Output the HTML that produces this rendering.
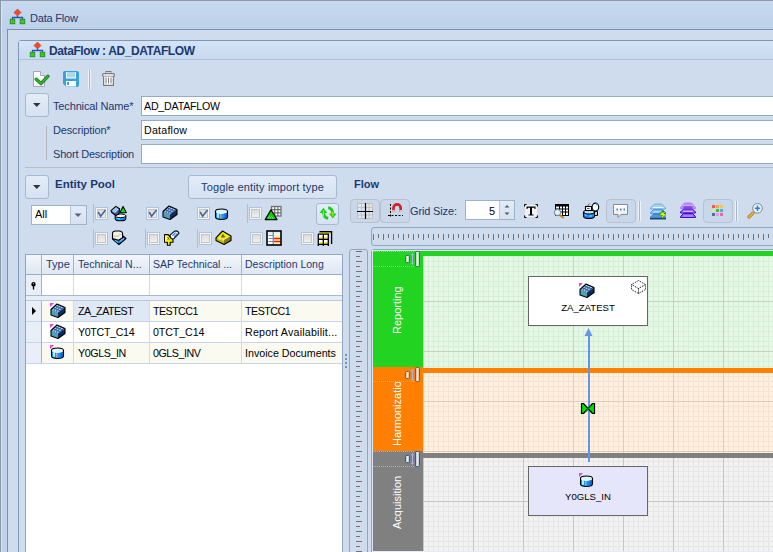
<!DOCTYPE html>
<html><head><meta charset="utf-8">
<style>
*{margin:0;padding:0;box-sizing:border-box}
html,body{width:773px;height:552px;overflow:hidden;background:#cfdcee;font-family:"Liberation Sans",sans-serif;font-size:11px;color:#1b3870}
.a{position:absolute}
.t{position:absolute;white-space:nowrap;line-height:13px}
.hl{position:absolute;height:1px}
.vl{position:absolute;width:1px}
.btn{position:absolute;border:1px solid #a7b9d1;border-radius:3px;background:linear-gradient(#e3ecf8,#d6e2f2)}
.inp{position:absolute;background:#fff;border:1px solid #94abc8}
.cb{position:absolute;width:13px;height:13px;border:1px solid #b5c3d5;background:linear-gradient(#dde3ea,#f4f6f9)}
.sep{position:absolute;width:1px;background:#aeb6c0}
.lbl{color:#1b3870}
.cell{position:absolute;color:#000;white-space:nowrap;line-height:13px}
</style></head><body>
<domain style="display:none">Computer-Use</domain>
<!-- outer window -->
<div class="a" style="left:0;top:0;width:773px;height:29px;background:linear-gradient(#c8d9ee,#bdd1ea)"></div>
<div class="hl" style="left:0;top:0;width:773px;background:#8e9aaa"></div>
<div class="vl" style="left:0;top:0;height:552px;background:#8b97a6"></div>
<div class="a" style="left:1px;top:29px;width:6px;height:523px;background:#bfd2ea"></div>
<div class="vl" style="left:1px;top:1px;height:551px;background:#d9e5f4"></div>
<div class="t" style="left:30px;top:12px;font-size:11px;letter-spacing:-0.2px">Data Flow</div>
<div class="hl" style="left:7px;top:29px;width:766px;background:#7890b0"></div>
<div class="vl" style="left:7px;top:29px;height:523px;background:#7890b0"></div>
<!-- panel -->
<div class="a" style="left:18px;top:40px;width:760px;height:520px;border:1px solid #7f98b9;border-radius:3px 0 0 0;background:#cfdcee"></div>
<div class="a" style="left:19px;top:41px;width:754px;height:18px;background:linear-gradient(#d4e4f7,#c8daf0)"></div>
<div class="hl" style="left:19px;top:59px;width:754px;background:#adc3dc"></div>
<div class="t" style="left:49px;top:44.5px;font-weight:bold;font-size:12px;letter-spacing:-0.4px">DataFlow : AD_DATAFLOW</div>

<!-- title icons -->
<svg class="a" style="left:9px;top:8px" width="18" height="17">
 <path d="M8.5 1 L12 4.5 L8.5 8 L5 4.5 Z" fill="#f04a2a" stroke="#d03010" stroke-width="0.6"/>
 <path d="M8.5 8 V9.5 M3.5 11.5 V9.5 H13.5 V11.5" stroke="#2454c8" stroke-width="1.3" fill="none"/>
 <rect x="1.2" y="11.2" width="4.6" height="4.6" fill="#3cc828" stroke="#1c8a10" stroke-width="0.8"/>
 <rect x="11.2" y="11.2" width="4.6" height="4.6" fill="#3cc828" stroke="#1c8a10" stroke-width="0.8"/>
</svg>
<svg class="a" style="left:29px;top:41px" width="18" height="17">
 <path d="M8.5 1 L12 4.5 L8.5 8 L5 4.5 Z" fill="#f04a2a" stroke="#d03010" stroke-width="0.6"/>
 <path d="M8.5 8 V9.5 M3.5 11.5 V9.5 H13.5 V11.5" stroke="#2454c8" stroke-width="1.3" fill="none"/>
 <rect x="1.2" y="11.2" width="4.6" height="4.6" fill="#3cc828" stroke="#1c8a10" stroke-width="0.8"/>
 <rect x="11.2" y="11.2" width="4.6" height="4.6" fill="#3cc828" stroke="#1c8a10" stroke-width="0.8"/>
</svg>
<!-- toolbar -->
<svg class="a" style="left:30px;top:68px" width="22" height="22">
 <path d="M3.5 3.5 H10.5 L14.5 7.5 V18.5 H3.5 Z" fill="#fff" stroke="#a6a3c2"/>
 <path d="M10.5 3.5 V7.5 H14.5" fill="#e8e8f0" stroke="#a6a3c2"/>
 <path d="M6.2 11.2 L11 15.6 L18 8.2" fill="none" stroke="#148814" stroke-width="3.4" stroke-linecap="round" stroke-linejoin="round"/>
 <path d="M6.2 11.2 L11 15.6 L18 8.2" fill="none" stroke="#3cb83c" stroke-width="1.4" stroke-linecap="round" stroke-linejoin="round"/>
</svg>
<svg class="a" style="left:60px;top:68px" width="22" height="22">
 <path d="M4.5 3 H17 Q19 3 19 5 V17 Q19 19 17 19 H6.5 L3 15.5 V4.5 Q3 3 4.5 3 Z" fill="#3aa2da"/>
 <rect x="6" y="4" width="10" height="6.5" fill="#fff"/>
 <rect x="7" y="4" width="8" height="5.5" fill="#a8d8ee"/>
 <rect x="6" y="13" width="10" height="5.5" fill="#fff"/>
 <rect x="7" y="14" width="2" height="3" fill="#3aa2da"/>
</svg>
<div class="vl" style="left:88px;top:69px;height:20px;background:#eef3fa"></div>
<div class="vl" style="left:89px;top:69px;height:20px;background:#a5b6cc"></div>
<div class="vl" style="left:90px;top:69px;height:20px;background:#eef3fa"></div>
<svg class="a" style="left:100px;top:69px" width="17" height="19">
 <path d="M6 3.5 V2.5 H11 V3.5" fill="none" stroke="#7a7a7a" stroke-width="1.2"/>
 <rect x="2.6" y="4.6" width="11.8" height="2.8" rx="1" fill="#fff" stroke="#7a7a7a" stroke-width="1.2"/>
 <path d="M3.6 7.5 V16.4 H13.4 V7.5" fill="#fff" stroke="#7a7a7a" stroke-width="1.2"/>
 <path d="M6 8.5 V14.5 M8.5 8.5 V14.5 M11 8.5 V14.5" stroke="#7a7a7a" stroke-width="1"/>
</svg>
<!-- form -->
<div class="btn" style="left:25px;top:93px;width:24px;height:24px"></div>
<svg class="a" style="left:33px;top:103px" width="8" height="4"><path d="M0 0 H7.5 L3.75 4 Z" fill="#333"/></svg>
<div class="t lbl" style="left:53px;top:100px;letter-spacing:-0.15px">Technical Name*</div>
<div class="t lbl" style="left:53px;top:124px;letter-spacing:-0.15px">Description*</div>
<div class="t lbl" style="left:53px;top:148px;letter-spacing:-0.2px">Short Description</div>
<div class="inp" style="left:141px;top:96px;width:640px;height:20px"></div>
<div class="inp" style="left:141px;top:120px;width:640px;height:20px"></div>
<div class="inp" style="left:141px;top:144px;width:640px;height:20px"></div>
<div class="t" style="left:144px;top:100px;color:#000;font-size:10.6px;letter-spacing:-0.18px">AD_DATAFLOW</div>
<div class="t" style="left:144px;top:124px;color:#000;font-size:10.6px;letter-spacing:0.25px">Dataflow</div>
<div class="vl" style="left:46px;top:126px;height:34px;background:#b4b9bf"></div>
<div class="hl" style="left:25px;top:167px;width:748px;background:#b9bdc3"></div>

<!-- entity pool -->
<div class="btn" style="left:25px;top:175px;width:24px;height:24px"></div>
<svg class="a" style="left:33px;top:185px" width="8" height="4"><path d="M0 0 H7.5 L3.75 4 Z" fill="#333"/></svg>
<div class="t" style="left:55px;top:178px;font-weight:bold;font-size:11.5px">Entity Pool</div>
<div class="btn" style="left:188px;top:175px;width:149px;height:24px"></div>
<div class="t" style="left:201px;top:181px;letter-spacing:0.15px">Toggle entity import type</div>

<div class="inp" style="left:31px;top:205px;width:56px;height:20px;border-color:#9fb2cc"></div>
<div class="t" style="left:35px;top:208px;color:#000">All</div>
<div class="a" style="left:70px;top:206px;width:16px;height:18px;border-left:1px solid #b7c6d9;background:linear-gradient(#e3ebf6,#d7e2f1)"></div>

<!-- entity pool controls -->
<div class="vl" style="left:93px;top:204px;height:19px;background:#b9bcbf"></div>
<div class="vl" style="left:247px;top:204px;height:19px;background:#b9bcbf"></div>
<div class="vl" style="left:93px;top:229px;height:19px;background:#b9bcbf"></div>
<div class="vl" style="left:145px;top:229px;height:19px;background:#b9bcbf"></div>
<div class="vl" style="left:197px;top:229px;height:19px;background:#b9bcbf"></div>
<div class="a" style="left:95px;top:207px;width:13px;height:13px;border:1px solid #acc4e4;background:#f6f4f0"><div class="a" style="left:1px;top:1px;width:9px;height:9px;border:1px solid #c4c4c4;background:linear-gradient(#dcdcdc,#f0f0f0)"></div><svg class="a" style="left:1px;top:1px" width="11" height="11"><path d="M1.2 3 L3.6 7.2 L8.5 1" fill="none" stroke="#46679a" stroke-width="1.6"/></svg></div>
<div class="a" style="left:146px;top:207px;width:13px;height:13px;border:1px solid #acc4e4;background:#f6f4f0"><div class="a" style="left:1px;top:1px;width:9px;height:9px;border:1px solid #c4c4c4;background:linear-gradient(#dcdcdc,#f0f0f0)"></div><svg class="a" style="left:1px;top:1px" width="11" height="11"><path d="M1.2 3 L3.6 7.2 L8.5 1" fill="none" stroke="#46679a" stroke-width="1.6"/></svg></div>
<div class="a" style="left:197px;top:207px;width:13px;height:13px;border:1px solid #acc4e4;background:#f6f4f0"><div class="a" style="left:1px;top:1px;width:9px;height:9px;border:1px solid #c4c4c4;background:linear-gradient(#dcdcdc,#f0f0f0)"></div><svg class="a" style="left:1px;top:1px" width="11" height="11"><path d="M1.2 3 L3.6 7.2 L8.5 1" fill="none" stroke="#46679a" stroke-width="1.6"/></svg></div>
<div class="a" style="left:249px;top:207px;width:13px;height:13px;border:1px solid #acc4e4;background:#f6f4f0"><div class="a" style="left:1px;top:1px;width:9px;height:9px;border:1px solid #c4c4c4;background:linear-gradient(#dcdcdc,#f0f0f0)"></div></div>
<div class="a" style="left:95px;top:232px;width:13px;height:13px;border:1px solid #acc4e4;background:#f6f4f0"><div class="a" style="left:1px;top:1px;width:9px;height:9px;border:1px solid #c4c4c4;background:linear-gradient(#dcdcdc,#f0f0f0)"></div></div>
<div class="a" style="left:147px;top:232px;width:13px;height:13px;border:1px solid #acc4e4;background:#f6f4f0"><div class="a" style="left:1px;top:1px;width:9px;height:9px;border:1px solid #c4c4c4;background:linear-gradient(#dcdcdc,#f0f0f0)"></div></div>
<div class="a" style="left:199px;top:232px;width:13px;height:13px;border:1px solid #acc4e4;background:#f6f4f0"><div class="a" style="left:1px;top:1px;width:9px;height:9px;border:1px solid #c4c4c4;background:linear-gradient(#dcdcdc,#f0f0f0)"></div></div>
<div class="a" style="left:250px;top:232px;width:13px;height:13px;border:1px solid #acc4e4;background:#f6f4f0"><div class="a" style="left:1px;top:1px;width:9px;height:9px;border:1px solid #c4c4c4;background:linear-gradient(#dcdcdc,#f0f0f0)"></div></div>
<div class="a" style="left:301px;top:232px;width:13px;height:13px;border:1px solid #acc4e4;background:#f6f4f0"><div class="a" style="left:1px;top:1px;width:9px;height:9px;border:1px solid #c4c4c4;background:linear-gradient(#dcdcdc,#f0f0f0)"></div></div>
<svg class="a" style="left:74px;top:213px" width="9" height="5"><path d="M0.5 0.5 H7.5 L4 4 Z" fill="#55657a"/></svg>
<div class="btn" style="left:316px;top:203px;width:23px;height:22px"></div>
<svg class="a" style="left:316px;top:203px" width="24" height="22">
 <path d="M12.2 15.4 Q8 14.6 7.4 9.5" fill="none" stroke="#14d014" stroke-width="2.8"/>
 <path d="M3.6 9.9 L7.4 4.8 L11.2 9.9 Z" fill="#14d014"/>
 <path d="M7.4 7.5 V13" stroke="#c8f000" stroke-width="1"/>
 <path d="M12.2 4.6 Q16.4 5.4 16.8 10.5" fill="none" stroke="#14d014" stroke-width="2.8"/>
 <path d="M13 10.4 L16.8 15.4 L20.6 10.4 Z" fill="#14d014"/>
 <path d="M16.8 8.5 V13.5" stroke="#c8f000" stroke-width="1"/>
</svg>
<svg class="a" style="left:110px;top:205px" width="18" height="17">
 <path d="M5.2 11 V13.8 Q5.2 15.8 10.5 15.8 Q15.8 15.8 15.8 13.8 V11 Z" fill="#1e90ff" stroke="#000" stroke-width="1.1"/>
 <path d="M6.5 12.5 Q8 14 10 14" stroke="#30f0ff" stroke-width="1.4" fill="none"/>
 <ellipse cx="10.5" cy="10.8" rx="5.3" ry="1.9" fill="#f4fbff" stroke="#000" stroke-width="1"/>
 <path d="M1 5.6 L5.8 1.4 L9.6 3.8 L8.9 8.9 L5.8 10.5 L1.6 7.4 Z" fill="#3a64a8" stroke="#000" stroke-width="1.1" stroke-linejoin="round"/>
 <path d="M1.6 5.8 L5.8 2.2 L9 4.2 L5 8 Z" fill="#86aee0"/>
 <path d="M3 6.5 L6.6 3 M4.6 7.4 L8 4.2" stroke="#e8f4ff" stroke-width="0.9"/>
 <path d="M13.1 1.4 L16.3 7.8 H9.9 Z" fill="#00f000" stroke="#000" stroke-width="1.1" stroke-linejoin="round"/>
</svg>
<svg class="a" style="left:162px;top:205px" width="16" height="16">
 <path d="M1 6.5 L7 1 L15 4.5 L8 9.5 Z" fill="#34559a"/>
 <ellipse cx="3.17" cy="6.08" rx="1.1" ry="0.8" fill="#a8d8f4"/><ellipse cx="5.50" cy="7.08" rx="1.1" ry="0.8" fill="#a8d8f4"/><ellipse cx="7.83" cy="8.08" rx="1.1" ry="0.8" fill="#a8d8f4"/><ellipse cx="5.17" cy="4.25" rx="1.1" ry="0.8" fill="#a8d8f4"/><ellipse cx="7.50" cy="5.25" rx="1.1" ry="0.8" fill="#a8d8f4"/><ellipse cx="9.83" cy="6.25" rx="1.1" ry="0.8" fill="#a8d8f4"/><ellipse cx="7.17" cy="2.42" rx="1.1" ry="0.8" fill="#a8d8f4"/><ellipse cx="9.50" cy="3.42" rx="1.1" ry="0.8" fill="#a8d8f4"/><ellipse cx="11.83" cy="4.42" rx="1.1" ry="0.8" fill="#a8d8f4"/>
 <path d="M1 6.5 L8 9.5 L8 14.5 L1 12 Z" fill="#4aa2ba"/>
 <path d="M8 9.5 L15 4.5 L15 9.5 L8 14.5 Z" fill="#0f2a5c"/>
 <path d="M1 6.5 L7 1 L15 4.5 L15 9.5 L8 14.5 L1 12 Z" fill="none" stroke="#000" stroke-width="1.1" stroke-linejoin="round"/></svg>
<svg class="a" style="left:214px;top:206px" width="16" height="15">
 <path d="M1.5 5.5 V11 Q1.5 13.5 7.5 13.5 Q13.5 13.5 13.5 11 V5.5 Z" fill="#1e8ef8"/>
 <rect x="3" y="7" width="2" height="5" fill="#40f0ff"/>
 <rect x="3.5" y="7.5" width="1" height="4" fill="#fff"/>
 <rect x="6" y="7" width="1.5" height="5.5" fill="#a8a8d0"/>
 <rect x="10.5" y="7" width="2.5" height="5" fill="#0a6ad0"/>
 <ellipse cx="7.5" cy="5.2" rx="6" ry="2.2" fill="#d8f4ff"/>
 <path d="M2.5 6.5 Q7.5 8.5 12.5 6.5" fill="none" stroke="#fff" stroke-width="1"/>
 <path d="M1.5 5.5 V11 Q1.5 13.5 7.5 13.5 Q13.5 13.5 13.5 11 V5.5 Q13.5 3 7.5 3 Q1.5 3 1.5 5.5 Z" fill="none" stroke="#000" stroke-width="1.1"/></svg>
<svg class="a" style="left:264px;top:205px" width="18" height="16">
 <rect x="7.5" y="1.5" width="9.5" height="9.5" fill="#fff" stroke="#707070" stroke-width="1.3"/>
 <path d="M10.7 1.5 V11 M13.9 1.5 V11 M7.5 4.7 H17 M7.5 7.9 H17" stroke="#707070" stroke-width="1.2"/>
 <path d="M7 4.8 L13 14.6 H1.2 Z" fill="#00d400" stroke="#000" stroke-width="1.2" stroke-linejoin="round"/>
 <path d="M4 12.8 H10" stroke="#a0e8a0" stroke-width="1" stroke-dasharray="1 1"/>
 <path d="M5 11.5 H9" stroke="#60c060" stroke-width="1" stroke-dasharray="1 1"/>
</svg>
<svg class="a" style="left:110px;top:229px" width="18" height="17">
 <path d="M2.5 10 L9 15.5 L16 9.5 L13 7 Z" fill="#2a62d0" stroke="#000" stroke-width="1.1" stroke-linejoin="round"/>
 <path d="M4.5 10.5 L8 13.5 M9.5 13 L14 9.5" stroke="#40d8f0" stroke-width="1.1"/>
 <path d="M11 11 L13 9.5" stroke="#c080f0" stroke-width="1"/>
 <path d="M2.5 4.8 Q2.5 2 5.8 2 H9 Q12.6 2.2 12.6 4.8 V8.6 L8.5 11.2 L2.5 9.6 Z" fill="#f2f2e6" stroke="#000" stroke-width="1.1" stroke-linejoin="round"/>
 <path d="M3.5 7 Q6 8 8 7 L11.5 5" fill="none" stroke="#c8c498" stroke-width="1"/>
</svg>
<svg class="a" style="left:162px;top:229px" width="18" height="17">
 <path d="M8 6.2 L12.6 2.2 Q14.2 1.4 16 2.6 L17 4.2 L12.2 9.4 Q10.2 11 8.6 9.2 Z" fill="#fff" stroke="#000" stroke-width="1.1" stroke-linejoin="round"/>
 <path d="M10.5 6.8 L13.5 3.6 M12.2 7.8 L15.2 4.6" stroke="#2a78e0" stroke-width="1.2"/>
 <path d="M2.6 5.6 H6.2 L8.8 9 L11 10.6 V13.2 H8.2 V16.2 H5.4 V13.2 H2.6 Z" fill="#f4ec00" stroke="#000" stroke-width="1.1" stroke-linejoin="round"/>
 <path d="M3.8 6.5 V12.5" stroke="#fffbe0" stroke-width="1.2"/>
 <path d="M5.5 8 L7.5 11 M7.5 8 L5.5 11" stroke="#6a6a20" stroke-width="0.7"/>
</svg>
<svg class="a" style="left:214px;top:229px" width="19" height="17">
 <path d="M2 8.8 L8.5 2 L17 7 L10 11 Z" fill="#f4ec00"/>
 <path d="M2 8.8 L10 11 L10 15.5 L2 11.5 Z" fill="#c8b400"/>
 <path d="M10 11 L17 7 L17 11.5 L10 15.5 Z" fill="#8a7a18"/>
 <path d="M8.8 4.8 L11.6 8.6 L6.6 8.6 Z" fill="#6a6020"/>
 <path d="M4.5 10 H7 M8 11 H10 M11 9.5 L12.5 8.5" stroke="#fff" stroke-width="0.9"/>
 <path d="M2 8.8 L8.5 2 L17 7 L17 11.5 L10 15.5 L2 11.5 Z" fill="none" stroke="#000" stroke-width="1.1" stroke-linejoin="round"/>
</svg>
<svg class="a" style="left:266px;top:230px" width="16" height="16">
 <rect x="1" y="1" width="14" height="14" fill="#fff"/>
 <rect x="1.5" y="1.5" width="13" height="3" fill="#e4f0fc"/>
 <rect x="7.5" y="5" width="7" height="9.5" fill="#fff4a8"/>
 <path d="M2.5 5.5 H7 M2.5 8.5 H7 M2.5 11.5 H7" stroke="#6a90d0" stroke-width="1.2"/>
 <path d="M8 8.5 H14.5 M8 11.5 H14.5" stroke="#f01818" stroke-width="1.3"/>
 <path d="M7.2 1.5 V14.5" stroke="#4a6ab0" stroke-width="1"/>
 <rect x="1" y="1" width="14" height="14" fill="none" stroke="#000" stroke-width="1.6"/>
</svg>
<svg class="a" style="left:317px;top:230px" width="16" height="16">
 <rect x="1" y="4" width="11" height="11" fill="#fff"/>
 <rect x="2.5" y="1" width="12.5" height="1.6" fill="#000"/>
 <rect x="2.8" y="2.6" width="10.5" height="1.3" fill="#f0dc00"/>
 <path d="M14.6 1 V14" stroke="#000" stroke-width="1.3"/>
 <rect x="2.2" y="7.3" width="3.6" height="1.6" fill="#f0dc00"/>
 <rect x="7.2" y="7.3" width="3.6" height="1.6" fill="#f0dc00"/>
 <rect x="2.2" y="12.3" width="3.6" height="1.6" fill="#f0dc00"/>
 <rect x="7.2" y="12.3" width="3.6" height="1.6" fill="#f0dc00"/>
 <path d="M1.3 3.8 V16 M6.3 4 V16 M11.3 4 V16 M1 4.2 H12 M1 9.4 H12 M1 14.4 H12" stroke="#000" stroke-width="1.3"/>
</svg>
<!-- grid -->
<div class="a" style="left:25px;top:254px;width:318px;height:300px;background:#fff;border:1px solid #8fa5c3"></div>
<div class="a" style="left:26px;top:255px;width:316px;height:19px;background:linear-gradient(#f4f7fc,#dee7f3)"></div>
<div class="hl" style="left:26px;top:274px;width:316px;background:#97acc8"></div>
<div class="a" style="left:26px;top:275px;width:15px;height:20px;background:#e9eff8"></div>
<div class="hl" style="left:26px;top:295px;width:316px;background:#a6b9d2"></div>
<div class="a" style="left:26px;top:296px;width:316px;height:4px;background:#e6edf7"></div>
<div class="hl" style="left:26px;top:300px;width:316px;background:#b9cae0"></div>
<div class="vl" style="left:41px;top:255px;height:40px;background:#9fb3cd"></div>
<div class="vl" style="left:73px;top:255px;height:19px;background:#9fb3cd"></div>
<div class="vl" style="left:149px;top:255px;height:19px;background:#9fb3cd"></div>
<div class="vl" style="left:241px;top:255px;height:19px;background:#9fb3cd"></div>
<div class="vl" style="left:73px;top:275px;height:20px;background:#cddbee"></div>
<div class="vl" style="left:149px;top:275px;height:20px;background:#cddbee"></div>
<div class="vl" style="left:241px;top:275px;height:20px;background:#cddbee"></div>
<!-- rows -->
<div class="a" style="left:26px;top:301px;width:15px;height:62px;background:#e9eff8"></div>
<div class="a" style="left:42px;top:301px;width:300px;height:20px;background:#fbfaf1"></div>
<div class="a" style="left:74px;top:301px;width:75px;height:20px;background:#dfe8f5"></div>
<div class="a" style="left:42px;top:343px;width:300px;height:20px;background:#fbfaf1"></div>
<div class="hl" style="left:26px;top:321px;width:316px;background:#c6d5ea"></div>
<div class="hl" style="left:26px;top:342px;width:316px;background:#c6d5ea"></div>
<div class="hl" style="left:26px;top:363px;width:316px;background:#c6d5ea"></div>
<div class="vl" style="left:41px;top:301px;height:62px;background:#9fb3cd"></div>
<div class="vl" style="left:73px;top:301px;height:62px;background:#cddbee"></div>
<div class="vl" style="left:149px;top:301px;height:62px;background:#cddbee"></div>
<div class="vl" style="left:241px;top:301px;height:62px;background:#cddbee"></div>
<div class="t" style="left:46px;top:258px;font-size:11px">Type</div>
<div class="t" style="left:78px;top:258px;font-size:10.6px">Technical N...</div>
<div class="t" style="left:153px;top:258px;font-size:10.5px">SAP Technical ...</div>
<div class="t" style="left:245px;top:258px;font-size:10.5px">Description Long</div>
<div class="cell" style="left:78px;top:305px;font-size:10.7px;letter-spacing:-0.5px">ZA_ZATEST</div>
<div class="cell" style="left:153px;top:305px;font-size:10.7px;letter-spacing:-0.55px">TESTCC1</div>
<div class="cell" style="left:245px;top:305px;font-size:10.7px;letter-spacing:-0.5px">TESTCC1</div>
<div class="cell" style="left:78px;top:326px;font-size:10.7px;letter-spacing:-0.35px">Y0TCT_C14</div>
<div class="cell" style="left:153px;top:326px;font-size:10.7px;letter-spacing:-0.12px">0TCT_C14</div>
<div class="cell" style="left:245px;top:326px;font-size:10.7px;letter-spacing:0.2px">Report Availabilit...</div>
<div class="cell" style="left:78px;top:347px;font-size:10.7px;letter-spacing:-0.4px">Y0GLS_IN</div>
<div class="cell" style="left:153px;top:347px;font-size:10.7px;letter-spacing:-0.45px">0GLS_INV</div>
<div class="cell" style="left:245px;top:347px;font-size:10.7px">Invoice Documents</div>

<!-- table icons -->
<svg class="a" style="left:31px;top:282px" width="6" height="8"><circle cx="2.5" cy="2.2" r="2.1" fill="#000"/><circle cx="2.5" cy="1.8" r="0.8" fill="#888"/><path d="M0.8 3.6 H4.2 M2.5 3.5 V7.5" stroke="#000" stroke-width="1.3"/></svg>
<svg class="a" style="left:32px;top:307px" width="5" height="8"><path d="M0 0 L4 4 L0 8 Z" fill="#000"/></svg>
<svg class="a" style="left:50px;top:303px" width="16" height="16"><path d="M0 0 H4 L0 4 Z" fill="#f040e0"/>
 <path d="M1 6.5 L7 1 L15 4.5 L8 9.5 Z" fill="#34559a"/>
 <ellipse cx="3.17" cy="6.08" rx="1.1" ry="0.8" fill="#a8d8f4"/><ellipse cx="5.50" cy="7.08" rx="1.1" ry="0.8" fill="#a8d8f4"/><ellipse cx="7.83" cy="8.08" rx="1.1" ry="0.8" fill="#a8d8f4"/><ellipse cx="5.17" cy="4.25" rx="1.1" ry="0.8" fill="#a8d8f4"/><ellipse cx="7.50" cy="5.25" rx="1.1" ry="0.8" fill="#a8d8f4"/><ellipse cx="9.83" cy="6.25" rx="1.1" ry="0.8" fill="#a8d8f4"/><ellipse cx="7.17" cy="2.42" rx="1.1" ry="0.8" fill="#a8d8f4"/><ellipse cx="9.50" cy="3.42" rx="1.1" ry="0.8" fill="#a8d8f4"/><ellipse cx="11.83" cy="4.42" rx="1.1" ry="0.8" fill="#a8d8f4"/>
 <path d="M1 6.5 L8 9.5 L8 14.5 L1 12 Z" fill="#4aa2ba"/>
 <path d="M8 9.5 L15 4.5 L15 9.5 L8 14.5 Z" fill="#0f2a5c"/>
 <path d="M1 6.5 L7 1 L15 4.5 L15 9.5 L8 14.5 L1 12 Z" fill="none" stroke="#000" stroke-width="1.1" stroke-linejoin="round"/></svg>
<svg class="a" style="left:50px;top:324px" width="16" height="16"><path d="M0 0 H4 L0 4 Z" fill="#f040e0"/>
 <path d="M1 6.5 L7 1 L15 4.5 L8 9.5 Z" fill="#34559a"/>
 <ellipse cx="3.17" cy="6.08" rx="1.1" ry="0.8" fill="#a8d8f4"/><ellipse cx="5.50" cy="7.08" rx="1.1" ry="0.8" fill="#a8d8f4"/><ellipse cx="7.83" cy="8.08" rx="1.1" ry="0.8" fill="#a8d8f4"/><ellipse cx="5.17" cy="4.25" rx="1.1" ry="0.8" fill="#a8d8f4"/><ellipse cx="7.50" cy="5.25" rx="1.1" ry="0.8" fill="#a8d8f4"/><ellipse cx="9.83" cy="6.25" rx="1.1" ry="0.8" fill="#a8d8f4"/><ellipse cx="7.17" cy="2.42" rx="1.1" ry="0.8" fill="#a8d8f4"/><ellipse cx="9.50" cy="3.42" rx="1.1" ry="0.8" fill="#a8d8f4"/><ellipse cx="11.83" cy="4.42" rx="1.1" ry="0.8" fill="#a8d8f4"/>
 <path d="M1 6.5 L8 9.5 L8 14.5 L1 12 Z" fill="#4aa2ba"/>
 <path d="M8 9.5 L15 4.5 L15 9.5 L8 14.5 Z" fill="#0f2a5c"/>
 <path d="M1 6.5 L7 1 L15 4.5 L15 9.5 L8 14.5 L1 12 Z" fill="none" stroke="#000" stroke-width="1.1" stroke-linejoin="round"/></svg>
<svg class="a" style="left:50px;top:345px" width="16" height="15"><path d="M0 0 H4 L0 4 Z" fill="#f040e0"/>
 <path d="M1.5 5.5 V11 Q1.5 13.5 7.5 13.5 Q13.5 13.5 13.5 11 V5.5 Z" fill="#1e8ef8"/>
 <rect x="3" y="7" width="2" height="5" fill="#40f0ff"/>
 <rect x="3.5" y="7.5" width="1" height="4" fill="#fff"/>
 <rect x="6" y="7" width="1.5" height="5.5" fill="#a8a8d0"/>
 <rect x="10.5" y="7" width="2.5" height="5" fill="#0a6ad0"/>
 <ellipse cx="7.5" cy="5.2" rx="6" ry="2.2" fill="#d8f4ff"/>
 <path d="M2.5 6.5 Q7.5 8.5 12.5 6.5" fill="none" stroke="#fff" stroke-width="1"/>
 <path d="M1.5 5.5 V11 Q1.5 13.5 7.5 13.5 Q13.5 13.5 13.5 11 V5.5 Q13.5 3 7.5 3 Q1.5 3 1.5 5.5 Z" fill="none" stroke="#000" stroke-width="1.1"/></svg>
<!-- flow -->
<div class="t" style="left:354px;top:178px;font-weight:bold">Flow</div>
<div class="t lbl" style="left:410px;top:205px;letter-spacing:-0.15px">Grid Size:</div>
<div class="inp" style="left:465px;top:200px;width:50px;height:20px;border-color:#9fb2cc"></div>
<div class="a" style="left:499px;top:201px;width:15px;height:18px;border-left:1px solid #b7c6d9;background:linear-gradient(#e3ebf6,#d7e2f1)"></div>
<div class="t" style="left:489px;top:205px;color:#000">5</div>
<svg class="a" style="left:502px;top:202px" width="10" height="16"><path d="M2.5 5.5 L5 3 L7.5 5.5 Z M2.5 10.5 L5 13 L7.5 10.5 Z" fill="#4a5a70"/></svg>

<!-- flow toolbar -->
<div class="a" style="left:350px;top:199px;width:30px;height:24px;border:1px solid #b8c1cc;border-radius:4px;background:#c9d7ea"></div>
<div class="a" style="left:380px;top:199px;width:30px;height:24px;border:1px solid #b8c1cc;border-radius:4px;background:#c9d7ea"></div>
<svg class="a" style="left:356px;top:202px" width="18" height="18">
 <path d="M1.5 1.5 H16.5 V16.5 H1.5 Z M5.5 1.5 V16.5 M13 1.5 V16.5 M1.5 5.5 H16.5 M1.5 13 H16.5" fill="#dde6f2" stroke="#c8c0b8" stroke-width="1"/>
 <path d="M9.5 1 V17 M1 9.5 H17" stroke="#000" stroke-width="1.2" stroke-dasharray="none"/>
</svg>
<svg class="a" style="left:386px;top:202px" width="18" height="18">
 <path d="M4.5 2 V16 M2 13.5 H17" stroke="#000" stroke-width="1" stroke-dasharray="2 1.5"/>
 <path d="M7.5 10 V6 A3.6 3.6 0 0 1 14.7 6 V10" fill="none" stroke="#d42020" stroke-width="2.6"/>
 <path d="M6.2 9 H8.8 M13.4 9 H16" stroke="#c8c8c8" stroke-width="2"/>
</svg>
<svg class="a" style="left:524px;top:204px" width="14" height="14">
 <rect x="1" y="1" width="12" height="12" fill="#f2f2f2"/>
 <path d="M0.5 0.5 H2.5 M0.5 0.5 V2.5 M13.5 0.5 H11.5 M13.5 0.5 V2.5 M0.5 13.5 H2.5 M0.5 13.5 V11.5 M13.5 13.5 H11.5 M13.5 13.5 V11.5" stroke="#000" stroke-width="1.2"/>
 <path d="M2.5 2.5 H11.5 V5 H10.6 L10.2 3.8 H8 V10.5 H9.5 V11.5 H4.5 V10.5 H6 V3.8 H3.8 L3.4 5 H2.5 Z" fill="#000"/>
</svg>
<svg class="a" style="left:553px;top:203px" width="17" height="16">
 <rect x="2.5" y="1.5" width="13" height="11" fill="#fff" stroke="#000" stroke-width="1"/>
 <rect x="2" y="1" width="14" height="2.5" fill="#000"/>
 <path d="M2.5 6 H15.5 M2.5 9 H15.5" stroke="#000" stroke-width="1"/>
 <path d="M6.5 1 V12.5 M9.5 1 V12.5 M12.5 1 V12.5" stroke="#000" stroke-width="1"/>
 <path d="M5.5 11 L10 14.5" stroke="#c88a20" stroke-width="2.2" stroke-linecap="round"/>
 <circle cx="4.5" cy="9.5" r="3.2" fill="#d8eef8" stroke="#6a8090" stroke-width="1"/>
 <circle cx="3.8" cy="8.8" r="1" fill="#fff"/>
</svg>
<svg class="a" style="left:582px;top:202px" width="18" height="17">
 <path d="M12 9.5 H15.5 V13.5 H12" fill="#c8d8f0" stroke="#000" stroke-width="1"/>
 <path d="M1.5 10 V14 Q1.5 16.5 7 16.5 Q12.5 16.5 12.5 14 V10 Z" fill="#1e88f0" stroke="#000" stroke-width="1.1"/>
 <path d="M3 13 H5 M7 14 H10" stroke="#8ad8ff" stroke-width="1.2"/>
 <ellipse cx="7" cy="10" rx="5.5" ry="2" fill="#b8e8ff" stroke="#000" stroke-width="1"/>
 <rect x="3.5" y="4.5" width="6" height="4" fill="#fff" stroke="#000" stroke-width="1.1"/>
 <path d="M5 6.5 H7.5" stroke="#555" stroke-width="1"/>
 <path d="M5.5 4 L7.5 1.5" stroke="#555" stroke-width="1"/>
 <ellipse cx="13.4" cy="5.1" rx="3.3" ry="4" fill="#fff" stroke="#000" stroke-width="1.1"/>
 <path d="M14 1.5 L15.5 3" stroke="#1e88f0" stroke-width="1.5"/>
</svg>
<div class="a" style="left:606px;top:199px;width:30px;height:24px;border:1px solid #b8c1cc;border-radius:4px;background:#c9d7ea"></div>
<svg class="a" style="left:612px;top:203px" width="18" height="16">
 <path d="M1.5 1.5 H15.5 V11.5 H9 L6 14.5 V11.5 H1.5 Z" fill="url(#cg)" stroke="#8a8a8a" stroke-width="1"/>
 <defs><linearGradient id="cg" x1="0" y1="0" x2="0" y2="1"><stop offset="0" stop-color="#fff"/><stop offset="1" stop-color="#e6e6e6"/></linearGradient></defs>
 <rect x="4.5" y="5.5" width="1.5" height="2" fill="#4a8aa8"/>
 <rect x="8" y="5.5" width="1.5" height="2" fill="#4a8aa8"/>
 <rect x="11.5" y="5.5" width="1.5" height="2" fill="#4a8aa8"/>
</svg>
<div class="vl" style="left:638px;top:201px;height:20px;background:#eef3fa"></div>
<div class="vl" style="left:639px;top:201px;height:20px;background:#a5b6cc"></div>
<div class="vl" style="left:640px;top:201px;height:20px;background:#eef3fa"></div>
<svg class="a" style="left:650px;top:203px" width="17" height="17">
 <path d="M0.5 5 L4.5 1 H11.5 L15.5 5 V6 H0.5 Z" fill="#a8d4f6" stroke="#5a9ee0" stroke-width="0.8"/>
 <path d="M2.5 4.5 H13.5" stroke="#e8f6ff" stroke-width="1"/>
 <path d="M0.5 9.5 L3.5 6.5 H12.5 L15.5 9.5 V10.5 H0.5 Z" fill="#78b8ec" stroke="#4a8ed8" stroke-width="0.8"/>
 <path d="M2.5 9 H13.5" stroke="#d0ecff" stroke-width="1"/>
 <path d="M0.5 14 L3.5 11 H12.5 L15.5 14 V15 H0.5 Z" fill="#4a98e0" stroke="#2a6ec0" stroke-width="0.8"/>
 <rect x="0" y="15" width="16" height="1.5" fill="#28406a"/>
 <path d="M9.5 9.5 H11.5 V7.5 H14 V9.5 H16 V12.5 H14 V15.5 H11.5 V12.5 H9.5 Z" fill="#10a010"/>
 <path d="M10.5 12 L12.5 10 H13.5 L12.5 11.5 H14.5 L12 14" fill="none" stroke="#f0f000" stroke-width="1.2"/>
</svg>
<svg class="a" style="left:680px;top:202px" width="17" height="17">
 <path d="M0.5 5.5 L4.5 1 H11.5 L15.5 5.5 V6.5 H0.5 Z" fill="#c58cfa" stroke="#b070f0" stroke-width="0.8"/>
 <path d="M3 4 H13" stroke="#e0c0ff" stroke-width="1"/>
 <path d="M0.5 10 L3.5 7 H12.5 L15.5 10 V11 H0.5 Z" fill="#a868f8" stroke="#2a10d8" stroke-width="1"/>
 <path d="M0.5 14.5 L3.5 11.5 H12.5 L15.5 14.5 V15.5 H0.5 Z" fill="#9858f0" stroke="#2a10d8" stroke-width="1"/>
 <path d="M3.5 5 H12.5" stroke="#2a10d8" stroke-width="1"/>
 <path d="M3 9.5 H13 M3 14 H13" stroke="#e0b8ff" stroke-width="0.9"/>
</svg>
<div class="a" style="left:703px;top:199px;width:30px;height:24px;border:1px solid #b8c1cc;border-radius:4px;background:#c9d7ea"></div>
<svg class="a" style="left:712px;top:205px" width="12" height="12">
 <rect x="0" y="0" width="3" height="3" fill="#f05a50"/><rect x="4" y="0" width="3" height="3" fill="#f8a058"/><rect x="8" y="0" width="3" height="3" fill="#f0c858"/>
 <rect x="0" y="4" width="3" height="3" fill="#d4eaa0"/><rect x="4" y="4" width="3" height="3" fill="#40c048"/><rect x="8" y="4" width="3" height="3" fill="#58a8e0"/>
 <rect x="0" y="8" width="3" height="3" fill="#5070a8"/><rect x="4" y="8" width="3" height="3" fill="#e0a0e0"/><rect x="8" y="8" width="3" height="3" fill="#f06898"/>
</svg>
<div class="vl" style="left:735px;top:201px;height:20px;background:#eef3fa"></div>
<div class="vl" style="left:736px;top:201px;height:20px;background:#a5b6cc"></div>
<div class="vl" style="left:737px;top:201px;height:20px;background:#eef3fa"></div>
<svg class="a" style="left:746px;top:201px" width="18" height="18">
 <path d="M7 12 L3 16" stroke="#c08828" stroke-width="3.4" stroke-linecap="round"/>
 <path d="M7 12 L3 16" stroke="#e8b050" stroke-width="1.6" stroke-linecap="round"/>
 <circle cx="11.5" cy="7.3" r="4.8" fill="#eef4f8" stroke="#7a8a8a" stroke-width="1"/>
 <path d="M11.5 4.5 V10 M8.8 7.3 H14.2" stroke="#2080f0" stroke-width="1.6"/>
</svg>
<!-- splitter -->
<div class="vl" style="left:342px;top:254px;height:298px;background:#8fa5c3"></div>

<!-- rulers -->
<div class="a" style="left:371px;top:227px;width:420px;height:19px;border:1px solid #8fa5c3;border-radius:3px;background:#cfdcee"></div>
<div class="a" style="left:373px;top:234px;width:400px;height:6px;background:repeating-linear-gradient(90deg,#737170 0 1px,transparent 1px 10px)"></div>
<div class="a" style="left:378px;top:234px;width:395px;height:4px;background:repeating-linear-gradient(90deg,#737170 0 1px,transparent 1px 10px)"></div>
<div class="a" style="left:349px;top:249px;width:19px;height:310px;border:1px solid #8fa5c3;border-radius:3px;background:#cfdcee"></div>
<div class="a" style="left:356px;top:251px;width:6px;height:301px;background:repeating-linear-gradient(180deg,#737170 0 1px,transparent 1px 10px)"></div>
<div class="a" style="left:356px;top:256px;width:4px;height:296px;background:repeating-linear-gradient(180deg,#737170 0 1px,transparent 1px 10px)"></div>
<div class="a" style="left:345px;top:354px;width:2px;height:14px;background:repeating-linear-gradient(180deg,#7c93b3 0 2px,transparent 2px 4px)"></div>

<!-- canvas -->
<div class="a" style="left:371px;top:249px;width:420px;height:310px;border:1px solid #8fa5c3;border-radius:3px;background:#fff"></div>
<div class="vl" style="left:372px;top:250px;height:302px;background:#dbe5f2"></div>
<div class="hl" style="left:372px;top:250px;width:401px;background:#dbe5f2"></div>
<!-- lane grids -->
<div class="a" style="left:423px;top:251px;width:350px;height:117px;background-color:#e4f8e4;background-image:linear-gradient(90deg,#c0d2c0 1px,transparent 1px),linear-gradient(#c0d2c0 1px,transparent 1px),linear-gradient(90deg,#d9eed9 1px,transparent 1px),linear-gradient(#d9eed9 1px,transparent 1px);background-size:50px 50px,50px 50px,5px 5px,5px 5px;background-position:0 0,0 0,0 0,0 0"></div>
<div class="a" style="left:423px;top:368px;width:350px;height:86px;background-color:#feefde;background-image:linear-gradient(90deg,#dfcdb9 1px,transparent 1px),linear-gradient(#dfcdb9 1px,transparent 1px),linear-gradient(90deg,#f3e3d0 1px,transparent 1px),linear-gradient(#f3e3d0 1px,transparent 1px);background-size:50px 50px,50px 50px,5px 5px,5px 5px;background-position:0 -117px,0 -117px,0 -2px,0 -2px"></div>
<div class="a" style="left:423px;top:454px;width:350px;height:98px;background-color:#f2f2f2;background-image:linear-gradient(90deg,#c6c6c6 1px,transparent 1px),linear-gradient(#c6c6c6 1px,transparent 1px),linear-gradient(90deg,#e6e6e6 1px,transparent 1px),linear-gradient(#e6e6e6 1px,transparent 1px);background-size:50px 50px,50px 50px,5px 5px,5px 5px;background-position:0 -203px,0 -203px,0 -3px,0 -3px"></div>
<div class="a" style="left:423px;top:251px;width:350px;height:5px;background:#22d322"></div>
<div class="a" style="left:423px;top:368px;width:350px;height:5px;background:#ff8000"></div>
<div class="a" style="left:423px;top:453px;width:350px;height:5px;background:#808080"></div>
<!-- lane headers -->
<div class="a" style="left:373px;top:251px;width:50px;height:116px;background:#22d322"></div>
<div class="a" style="left:373px;top:367px;width:50px;height:84px;background:#ff8000"></div>
<div class="a" style="left:373px;top:451px;width:50px;height:100px;background:#808080"></div>
<div class="hl" style="left:372px;top:551px;width:401px;background:#e4ebf5"></div>
<div class="a" style="left:373px;top:267px;width:50px;height:100px;overflow:hidden">
  <div class="t" style="left:18px;top:66.5px;transform-origin:0 0;transform:rotate(-90deg);color:#fff;font-size:11px">Reporting</div>
</div>
<div class="a" style="left:373px;top:382px;width:50px;height:69px;overflow:hidden">
  <div class="t" style="left:18px;top:63.5px;transform-origin:0 0;transform:rotate(-90deg);color:#fff;font-size:11px">Harmonization</div>
</div>
<div class="a" style="left:373px;top:467px;width:50px;height:85px;overflow:hidden">
  <div class="t" style="left:18px;top:62px;transform-origin:0 0;transform:rotate(-90deg);color:#fff;font-size:11px">Acquisition</div>
</div>
<!-- dotted lines -->
<div class="a" style="left:373px;top:251px;width:42px;height:1px;background:repeating-linear-gradient(90deg,#a8b0f0 0 1px,transparent 1px 2px)"></div>
<div class="a" style="left:373px;top:266px;width:42px;height:1px;background:repeating-linear-gradient(90deg,#a8b0f0 0 1px,transparent 1px 2px)"></div>
<div class="a" style="left:373px;top:381px;width:42px;height:1px;background:repeating-linear-gradient(90deg,#a8b0f0 0 1px,transparent 1px 2px)"></div>
<div class="a" style="left:373px;top:451px;width:42px;height:1px;background:repeating-linear-gradient(90deg,#a8b0f0 0 1px,transparent 1px 2px)"></div>
<div class="a" style="left:373px;top:466px;width:42px;height:1px;background:repeating-linear-gradient(90deg,#a8b0f0 0 1px,transparent 1px 2px)"></div>
<!-- handles -->
<svg class="a" style="left:403px;top:251px" width="20" height="17">
 <defs><linearGradient id="hg" x1="0" y1="0" x2="1" y2="0"><stop offset="0" stop-color="#98c8a0"/><stop offset="0.5" stop-color="#e0f0e0"/><stop offset="1" stop-color="#98c8a0"/></linearGradient></defs>
 <rect x="2.5" y="4.5" width="4" height="7" rx="1" fill="url(#hg)" stroke="#2e7a48"/>
 <path d="M9.5 2.5 V13.5" stroke="#a8b0f0" stroke-width="1"/>
 <path d="M7.8 4.2 L9.5 2 L11.2 4.2 Z M7.8 11.8 L9.5 14 L11.2 11.8 Z" fill="#a8b0f0"/>
 <rect x="12.5" y="0.5" width="4" height="15" rx="1" fill="url(#hg)" stroke="#2e7a48"/>
</svg>
<svg class="a" style="left:403px;top:367px" width="20" height="17">
 <defs><linearGradient id="ho" x1="0" y1="0" x2="1" y2="0"><stop offset="0" stop-color="#c8a888"/><stop offset="0.5" stop-color="#f4e4d4"/><stop offset="1" stop-color="#c8a888"/></linearGradient></defs>
 <rect x="2.5" y="4.5" width="4" height="7" rx="1" fill="url(#ho)" stroke="#8a5a3a"/>
 <path d="M9.5 2.5 V13.5" stroke="#a8b0f0" stroke-width="1"/>
 <path d="M7.8 4.2 L9.5 2 L11.2 4.2 Z M7.8 11.8 L9.5 14 L11.2 11.8 Z" fill="#a8b0f0"/>
 <rect x="12.5" y="0.5" width="4" height="14" rx="1" fill="url(#ho)" stroke="#8a5a3a"/>
</svg>
<svg class="a" style="left:403px;top:451px" width="20" height="17">
 <defs><linearGradient id="hy" x1="0" y1="0" x2="1" y2="0"><stop offset="0" stop-color="#a8b8c8"/><stop offset="0.5" stop-color="#e4e8f0"/><stop offset="1" stop-color="#a8b8c8"/></linearGradient></defs>
 <rect x="2.5" y="4.5" width="4" height="7" rx="1" fill="url(#hy)" stroke="#3a5a80"/>
 <path d="M9.5 2.5 V13.5" stroke="#a8b0f0" stroke-width="1"/>
 <path d="M7.8 4.2 L9.5 2 L11.2 4.2 Z M7.8 11.8 L9.5 14 L11.2 11.8 Z" fill="#a8b0f0"/>
 <rect x="12.5" y="0.5" width="4" height="15" rx="1" fill="url(#hy)" stroke="#3a5a80"/>
</svg>

<!-- nodes -->
<div class="a" style="left:528px;top:276px;width:120px;height:50px;border:1px solid #666;background:#fff"></div>
<div class="t" style="left:528px;top:301px;width:120px;text-align:center;color:#000;font-size:9.6px">ZA_ZATEST</div>
<div class="a" style="left:528px;top:466px;width:120px;height:50px;border:1px solid #666;background:#e6e6fa"></div>
<div class="t" style="left:528px;top:490px;width:120px;text-align:center;color:#000;font-size:9.6px">Y0GLS_IN</div>
<svg class="a" style="left:579px;top:283px" width="16" height="16"><path d="M0 0 H4 L0 4 Z" fill="#f040e0"/>
 <path d="M1 6.5 L7 1 L15 4.5 L8 9.5 Z" fill="#34559a"/>
 <ellipse cx="3.17" cy="6.08" rx="1.1" ry="0.8" fill="#a8d8f4"/><ellipse cx="5.50" cy="7.08" rx="1.1" ry="0.8" fill="#a8d8f4"/><ellipse cx="7.83" cy="8.08" rx="1.1" ry="0.8" fill="#a8d8f4"/><ellipse cx="5.17" cy="4.25" rx="1.1" ry="0.8" fill="#a8d8f4"/><ellipse cx="7.50" cy="5.25" rx="1.1" ry="0.8" fill="#a8d8f4"/><ellipse cx="9.83" cy="6.25" rx="1.1" ry="0.8" fill="#a8d8f4"/><ellipse cx="7.17" cy="2.42" rx="1.1" ry="0.8" fill="#a8d8f4"/><ellipse cx="9.50" cy="3.42" rx="1.1" ry="0.8" fill="#a8d8f4"/><ellipse cx="11.83" cy="4.42" rx="1.1" ry="0.8" fill="#a8d8f4"/>
 <path d="M1 6.5 L8 9.5 L8 14.5 L1 12 Z" fill="#4aa2ba"/>
 <path d="M8 9.5 L15 4.5 L15 9.5 L8 14.5 Z" fill="#0f2a5c"/>
 <path d="M1 6.5 L7 1 L15 4.5 L15 9.5 L8 14.5 L1 12 Z" fill="none" stroke="#000" stroke-width="1.1" stroke-linejoin="round"/></svg>
<svg class="a" style="left:630px;top:279px" width="18" height="16">
 <path d="M1.5 5.5 L8.5 1.5 L15.5 5.5 L15.5 10.5 L8.5 14.5 L1.5 10.5 Z M1.5 5.5 L8.5 9.5 L15.5 5.5 M8.5 9.5 V14.5" fill="none" stroke="#000" stroke-width="1" stroke-dasharray="1 1"/>
</svg>
<svg class="a" style="left:579px;top:473px" width="16" height="15"><path d="M0 0 H4 L0 4 Z" fill="#f040e0"/>
 <path d="M1.5 5.5 V11 Q1.5 13.5 7.5 13.5 Q13.5 13.5 13.5 11 V5.5 Z" fill="#1e8ef8"/>
 <rect x="3" y="7" width="2" height="5" fill="#40f0ff"/>
 <rect x="3.5" y="7.5" width="1" height="4" fill="#fff"/>
 <rect x="6" y="7" width="1.5" height="5.5" fill="#a8a8d0"/>
 <rect x="10.5" y="7" width="2.5" height="5" fill="#0a6ad0"/>
 <ellipse cx="7.5" cy="5.2" rx="6" ry="2.2" fill="#d8f4ff"/>
 <path d="M2.5 6.5 Q7.5 8.5 12.5 6.5" fill="none" stroke="#fff" stroke-width="1"/>
 <path d="M1.5 5.5 V11 Q1.5 13.5 7.5 13.5 Q13.5 13.5 13.5 11 V5.5 Q13.5 3 7.5 3 Q1.5 3 1.5 5.5 Z" fill="none" stroke="#000" stroke-width="1.1"/></svg>
<div class="a" style="left:587.5px;top:334px;width:2px;height:128px;background:#6495ed"></div>
<svg class="a" style="left:583px;top:328px" width="12" height="10"><path d="M5.5 0 L9.5 8 L1.5 8 Z" fill="#6495ed"/></svg>
<svg class="a" style="left:580px;top:402px" width="16" height="13">
 <path d="M1.5 1.5 H3.5 L8 6.5 L12.5 1.5 H14.5 V11.5 H12.5 L8 6.5 L3.5 11.5 H1.5 Z" fill="#00e000" stroke="#000" stroke-width="1.2" stroke-linejoin="round"/>
 <path d="M5.5 10 L11 3.5" stroke="#008000" stroke-width="1.2"/>
</svg>
</body></html>
